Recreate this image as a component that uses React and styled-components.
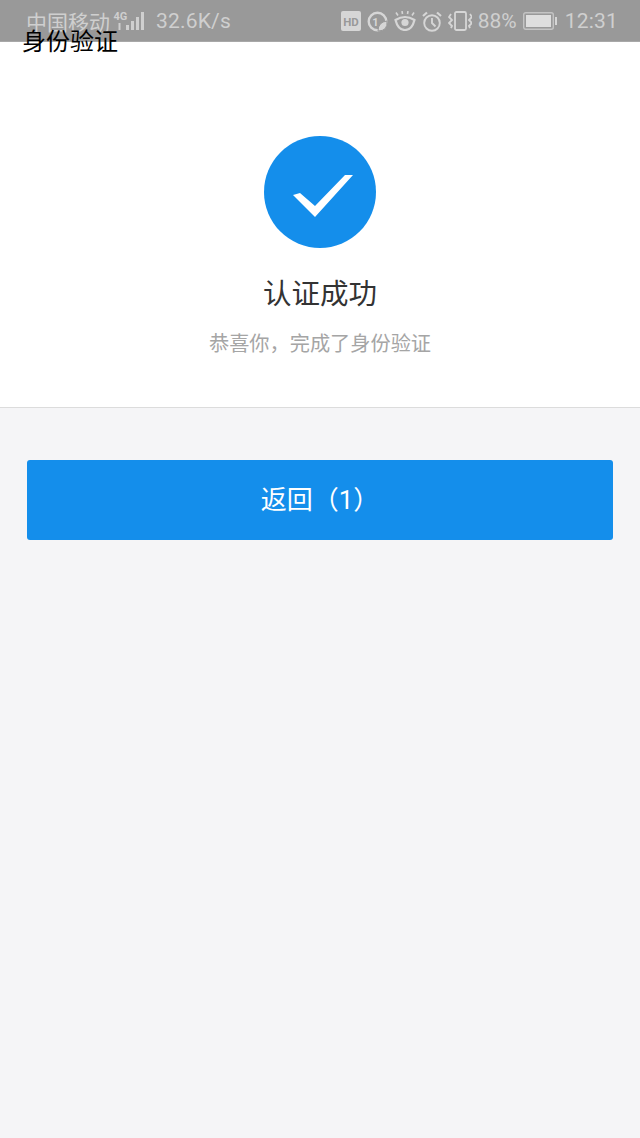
import React from 'react';
import styled, { createGlobalStyle } from 'styled-components';

const GlobalStyle = createGlobalStyle`
  html, body {
    margin: 0;
    padding: 0;
    background: #f5f5f7;
  }
  body {
    font-family: "Roboto", "Noto Sans CJK SC", sans-serif;
  }
`;

const Page = styled.div`
  position: relative;
  width: 640px;
  height: 1138px;
  overflow: hidden;
  background: #f5f5f7;
`;

const StatusBar = styled.div`
  display: flex;
  align-items: center;
  justify-content: space-between;
  height: 42px;
  padding: 1px 22px 0 26px;
  box-sizing: border-box;
  background: #999999;
  border-bottom: 1px solid #a8a8a8;
  color: #cfcfcf;
  font-size: 21px;
`;

const StatusGroup = styled.div`
  display: flex;
  align-items: center;
  gap: ${(p) => p.$gap || 0}px;
`;

const Carrier = styled.span`
  margin-right: 3px;
`;

const Speed = styled.span`
  margin-left: 9px;
  letter-spacing: 0.2px;
`;

const Clock = styled.span`
  margin-left: 2px;
  letter-spacing: 0.2px;
`;

// overlaps the status bar in the reference
const PageTitle = styled.div`
  position: absolute;
  left: 22px;
  top: 25px;
  font-size: 24px;
  line-height: 34px;
  color: #000;
`;

const ResultPanel = styled.section`
  display: flex;
  flex-direction: column;
  align-items: center;
  height: 366px;
  padding-top: 94px;
  box-sizing: border-box;
  background: #fff;
  border-bottom: 1px solid #dcdcdc;
`;

const ResultTitle = styled.h1`
  margin: 27px 0 0;
  font-size: 28.5px;
  line-height: 40px;
  font-weight: 400;
  color: #333;
`;

const ResultText = styled.p`
  margin: 14px 0 0;
  font-size: 20.2px;
  line-height: 30px;
  color: #a5a5a5;
`;

const Actions = styled.div`
  padding: 52px 27px 0;
`;

const BackButton = styled.button`
  display: block;
  width: 100%;
  height: 80px;
  padding: 0 0 5px;
  border: 0;
  border-radius: 3px;
  background: #148eeb;
  color: #fff;
  font-family: inherit;
  font-size: 26px;
`;

const SignalIcon = () => (
  <svg width="34" height="24" viewBox="0 0 34 24" fill="#cfcfcf">
    <text x="0.5" y="11" fontSize="11" fontWeight="700" fontFamily="Roboto, sans-serif">4G</text>
    <rect x="5.5" y="14" width="2" height="7" />
    <rect x="13" y="16" width="3" height="5" />
    <rect x="18" y="12" width="3" height="9" />
    <rect x="23" y="8" width="3" height="13" />
    <rect x="28" y="3" width="3" height="18" />
  </svg>
);

const HdIcon = () => (
  <svg width="20" height="20" viewBox="0 0 20 20">
    <rect width="20" height="20" rx="2" fill="#d6d6d6" />
    <text x="10" y="14.5" textAnchor="middle" fontSize="11.5" fontWeight="700" fontFamily="Roboto, sans-serif" fill="#999">HD</text>
  </svg>
);

const DataIcon = () => (
  <svg width="21" height="21" viewBox="0 0 21 21" fill="none" stroke="#d6d6d6" strokeWidth="2.4">
    <circle cx="10.5" cy="10.5" r="8.8" />
    <text x="8.5" y="14.5" textAnchor="middle" fontSize="11" fontWeight="700" fontFamily="Roboto, sans-serif" fill="#d6d6d6" stroke="none">1</text>
    <path d="M11 20 Q11 11 20 10 Q21 20 11 20Z" fill="#d6d6d6" stroke="#999" strokeWidth="1" />
  </svg>
);

const EyeIcon = () => (
  <svg width="22" height="20" viewBox="0 0 22 20" fill="none" stroke="#d6d6d6" strokeWidth="2.2">
    <path d="M1.5 9 Q11 3 20.5 9 Q18 19 11 19 Q4 19 1.5 9Z" />
    <circle cx="11" cy="11.5" r="3.6" fill="#d6d6d6" stroke="none" />
    <path d="M4 4.5 L2 1.5 M8.5 3 L8 0 M13.5 3 L14 0 M18 4.5 L20 1.5" strokeWidth="1.6" />
  </svg>
);

const AlarmIcon = () => (
  <svg width="20" height="21" viewBox="0 0 20 21" fill="none" stroke="#d6d6d6" strokeWidth="1.9">
    <circle cx="10" cy="12" r="7.8" />
    <path d="M10 7 V12 L13.5 15.5" />
    <path d="M1 5 L5 1.5 M19 5 L15 1.5" strokeWidth="2.2" />
  </svg>
);

const VibrateIcon = () => (
  <svg width="24" height="20" viewBox="0 0 24 20" fill="none" stroke="#d6d6d6" strokeWidth="1.8">
    <rect x="7" y="1" width="11" height="18" rx="1.5" />
    <path d="M3 3 L1 6 L4 9 L1 12 L4 15 L3 17 M22 3 L24 6 L21 9 L24 12 L21 15 L22 17" />
  </svg>
);

const BatteryIcon = () => (
  <svg width="34" height="18" viewBox="0 0 34 18">
    <rect x="0.7" y="0.7" width="29.6" height="16.6" rx="2" fill="none" stroke="#c4c4c4" strokeWidth="1.4" />
    <rect x="3" y="3" width="25" height="12" fill="#dedede" />
    <rect x="32" y="5" width="2" height="8" fill="#d6d6d6" />
  </svg>
);

const CheckBadge = () => (
  <svg width="112" height="112" viewBox="0 0 112 112">
    <circle cx="56" cy="56" r="56" fill="#148eeb" />
    <path d="M29 59 L36 57 L51 70 L81 39 L89 39 L51 81 Z" fill="#fff" />
  </svg>
);

const App = () => (
  <Page>
    <GlobalStyle />
    <StatusBar>
      <StatusGroup>
        <Carrier>中国移动</Carrier>
        <SignalIcon />
        <Speed>32.6K/s</Speed>
      </StatusGroup>
      <StatusGroup $gap={6}>
        <HdIcon />
        <DataIcon />
        <EyeIcon />
        <AlarmIcon />
        <VibrateIcon />
        <span>88%</span>
        <BatteryIcon />
        <Clock>12:31</Clock>
      </StatusGroup>
    </StatusBar>
    <PageTitle>身份验证</PageTitle>
    <ResultPanel>
      <CheckBadge />
      <ResultTitle>认证成功</ResultTitle>
      <ResultText>恭喜你，完成了身份验证</ResultText>
    </ResultPanel>
    <Actions>
      <BackButton type="button">返回（1）</BackButton>
    </Actions>
  </Page>
);

export default App;
